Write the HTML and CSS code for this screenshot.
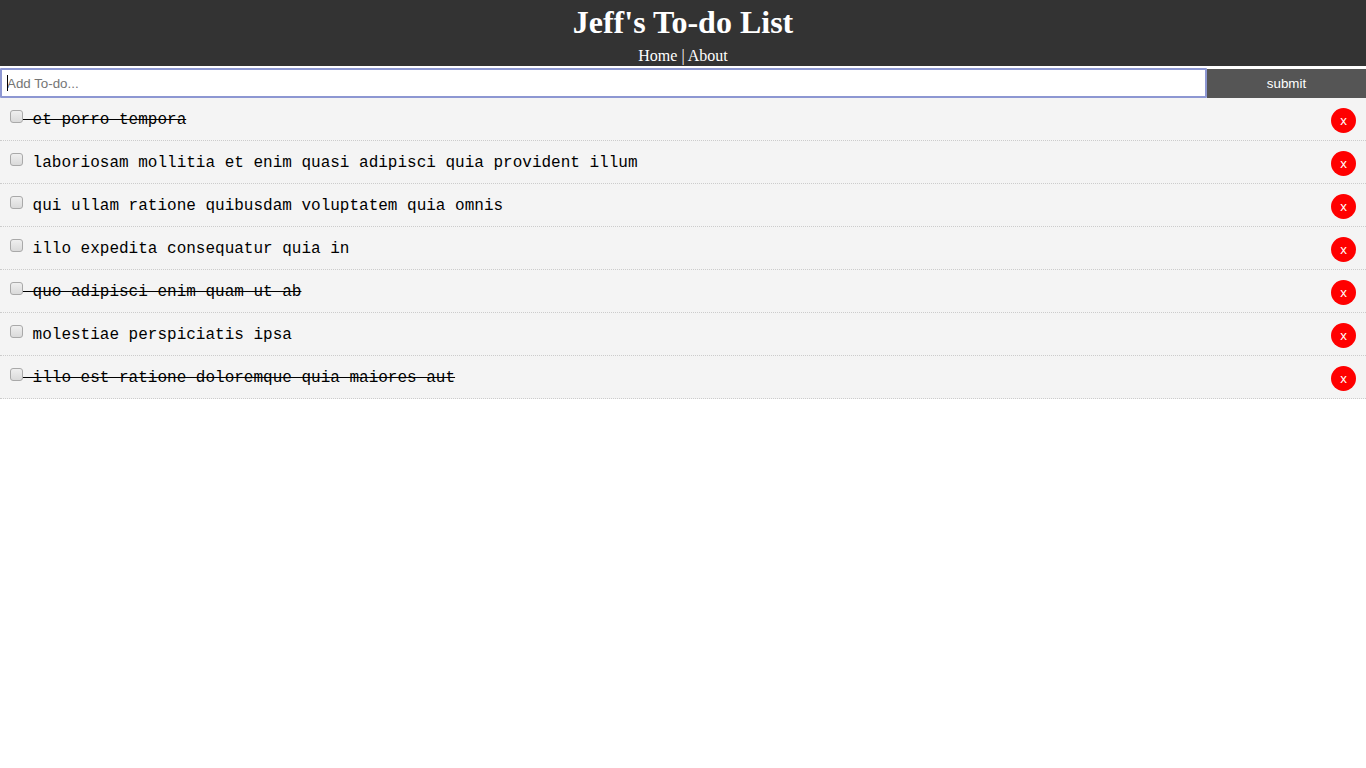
FILE: index.html
```html
<!DOCTYPE html>
<html lang="en">
<head>
<meta charset="utf-8">
<title>Jeff's To-do List</title>
<link rel="stylesheet" href="styles.css">
</head>
<body>
<header class="header">
  <h1 class="title">Jeff's To-do List</h1>
  <nav class="nav"><a class="nav-link" href="#">Home</a> | <a class="nav-link" href="#">About</a></nav>
</header>
<form class="add-form">
  <div class="input-wrap">
    <input class="add-input" type="text" name="title" placeholder="Add To-do...">
    <span class="caret"></span>
  </div>
  <button class="submit-btn" type="button">submit</button>
</form>
<ul class="todo-list">
  <li class="todo"><input class="check" type="checkbox"><span class="todo-text done"> et porro tempora</span><button class="del-btn" type="button">x</button></li>
  <li class="todo"><input class="check" type="checkbox"><span class="todo-text"> laboriosam mollitia et enim quasi adipisci quia provident illum</span><button class="del-btn" type="button">x</button></li>
  <li class="todo"><input class="check" type="checkbox"><span class="todo-text"> qui ullam ratione quibusdam voluptatem quia omnis</span><button class="del-btn" type="button">x</button></li>
  <li class="todo"><input class="check" type="checkbox"><span class="todo-text"> illo expedita consequatur quia in</span><button class="del-btn" type="button">x</button></li>
  <li class="todo"><input class="check" type="checkbox"><span class="todo-text done"> quo adipisci enim quam ut ab</span><button class="del-btn" type="button">x</button></li>
  <li class="todo"><input class="check" type="checkbox"><span class="todo-text"> molestiae perspiciatis ipsa</span><button class="del-btn" type="button">x</button></li>
  <li class="todo"><input class="check" type="checkbox"><span class="todo-text done"> illo est ratione doloremque quia maiores aut</span><button class="del-btn" type="button">x</button></li>
</ul>
</body>
</html>
```

FILE: styles.css
```css
* { box-sizing: border-box; }

body {
  margin: 0;
  background: #fff;
  font-family: "Liberation Serif", "Times New Roman", serif;
  color: #000;
}

.header {
  background: #333;
  color: #fff;
  text-align: center;
  height: 66px;
  padding-top: 4px;
}

.title {
  margin: 0;
  font-size: 32px;
  font-weight: bold;
  line-height: 37px;
}

.nav {
  margin-top: 6px;
  font-size: 16px;
  line-height: 18px;
}

.nav-link {
  color: #fff;
  text-decoration: none;
}

.add-form {
  margin: 2px 0 0;
  display: grid;
  grid-template-columns: 1fr 159px;
  height: 30px;
}

.input-wrap {
  position: relative;
  display: flex;
}

.add-input {
  flex: 1;
  margin: 0;
  border: 2px solid #8d97d2;
  border-radius: 1px;
  padding: 0 5px;
  font-family: "Liberation Sans", Arial, sans-serif;
  font-size: 13.33px;
  outline: none;
  background: #fff;
}

.add-input::placeholder {
  color: #757575;
}

.caret {
  position: absolute;
  left: 7px;
  top: 7px;
  width: 1px;
  height: 16px;
  background: #000;
}

.submit-btn {
  margin: 1px 0 0;
  border: none;
  background: #555;
  color: #fff;
  font-family: "Liberation Sans", Arial, sans-serif;
  font-size: 13.33px;
  padding: 0 20px;
}

.todo-list {
  list-style: none;
  margin: 0;
  padding: 0;
}

.todo {
  display: flex;
  align-items: flex-start;
  background: #f4f4f4;
  padding: 10px;
  height: 43px;
  border-bottom: 1px dotted #ccc;
}

.check {
  appearance: none;
  -webkit-appearance: none;
  margin: 2px 0 0;
  width: 13px;
  height: 13px;
  border: 1px solid #a9a9a9;
  border-radius: 3px;
  background: linear-gradient(#efefef, #dadada);
  flex: none;
}

.todo-text {
  margin-top: 1px;
  font-family: "Liberation Mono", "Courier New", monospace;
  font-size: 16px;
  line-height: 22px;
  white-space: pre;
}

.todo-text.done {
  text-decoration: line-through;
}

.del-btn {
  margin-left: auto;
  flex: none;
  width: 25px;
  height: 25px;
  padding: 0;
  border: none;
  border-radius: 50%;
  background: #ff0000;
  color: #fff;
  font-family: "Liberation Sans", Arial, sans-serif;
  font-size: 13.33px;
  line-height: 25px;
  text-align: center;
}
```
